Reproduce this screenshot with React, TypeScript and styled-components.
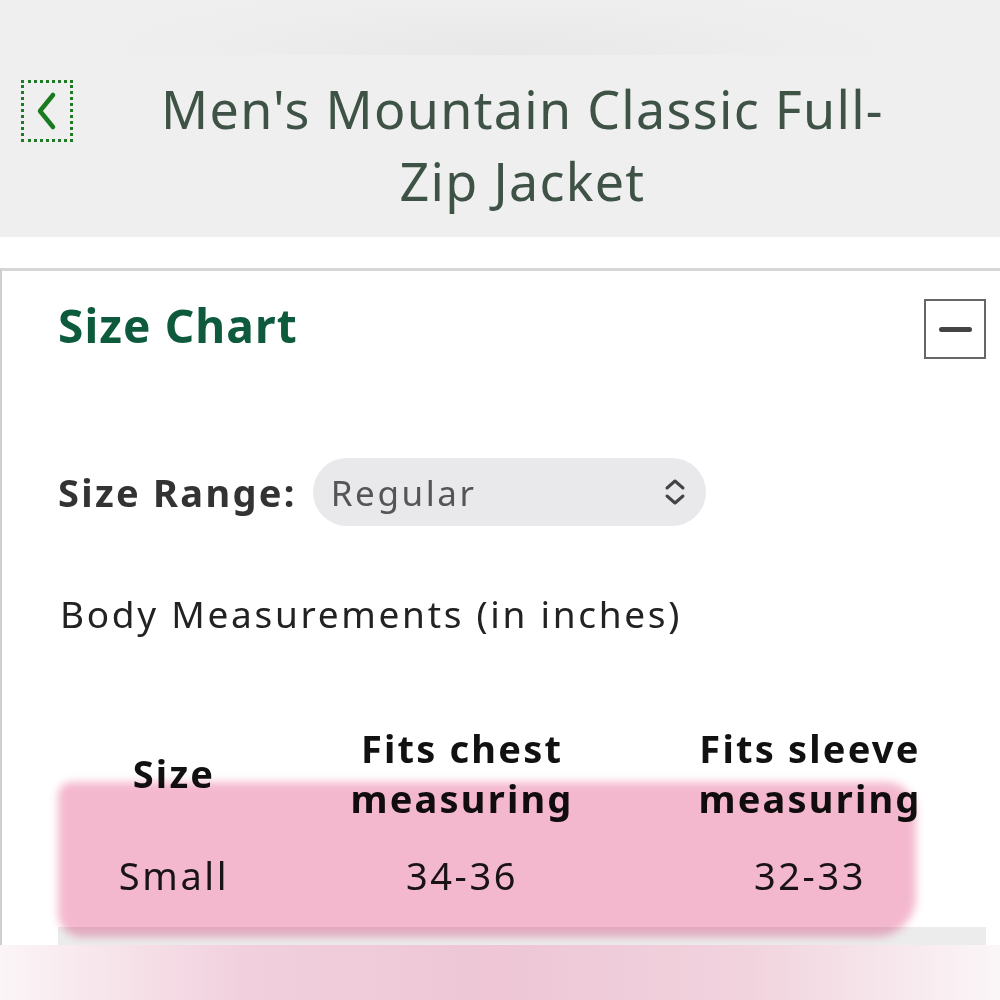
import styled, { createGlobalStyle } from "styled-components";

const GlobalStyle = createGlobalStyle`
    html, body {
        margin: 0;
        padding: 0;
        background: #ffffff;
        font-family: "Noto Sans", "Open Sans", sans-serif;
    }
`;

type Row = {
    size: string;
    chest: string;
    sleeve: string;
};

const rows: Row[] = [{ size: "Small", chest: "34-36", sleeve: "32-33" }];

const BackIcon = () => (
    <svg width="28" height="42" viewBox="0 0 28 42">
        <path
            d="M20 5 L7 21 L20 37"
            fill="none"
            stroke="#1a7a1f"
            strokeWidth="4.5"
            strokeLinecap="round"
            strokeLinejoin="round"
        />
    </svg>
);

const UpDownIcon = () => (
    <svg width="26" height="30" viewBox="0 0 26 30">
        <path
            d="M5 11 L13 4 L21 11 M5 19 L13 26 L21 19"
            fill="none"
            stroke="#444"
            strokeWidth="3"
            strokeLinecap="round"
            strokeLinejoin="round"
        />
    </svg>
);

const App = () => {
    return (
        <>
            <GlobalStyle />
            <SPage>
                <STopStrip />
                <SHeader>
                    <SBackButton>
                        <BackIcon />
                    </SBackButton>
                    <STitle>
                        Men's Mountain Classic Full-
                        <br />
                        Zip Jacket
                    </STitle>
                </SHeader>
                <SGap />
                <SPanel>
                    <SPanelHead>
                        <h2>Size Chart</h2>
                        <SToggle>
                            <span />
                        </SToggle>
                    </SPanelHead>
                    <SRangeRow>
                        <label>Size Range:</label>
                        <SSelect>
                            <span>Regular</span>
                            <UpDownIcon />
                        </SSelect>
                    </SRangeRow>
                    <SCaption>Body Measurements (in inches)</SCaption>
                    <STableWrap>
                        <SHighlight />
                        <STable>
                            <thead>
                                <tr>
                                    <th>Size</th>
                                    <th>
                                        Fits chest
                                        <br />
                                        measuring
                                    </th>
                                    <th>
                                        Fits sleeve
                                        <br />
                                        measuring
                                    </th>
                                </tr>
                            </thead>
                            <tbody>
                                {rows.map((r) => (
                                    <tr key={r.size}>
                                        <td>{r.size}</td>
                                        <td>{r.chest}</td>
                                        <td>{r.sleeve}</td>
                                    </tr>
                                ))}
                                <SStripe>
                                    <td colSpan={3} />
                                </SStripe>
                            </tbody>
                        </STable>
                    </STableWrap>
                </SPanel>
                <SBottomFade />
            </SPage>
        </>
    );
};

const SPage = styled.div`
    width: 1000px;
    height: 1000px;
    overflow: hidden;
    display: flex;
    flex-direction: column;
`;

const STopStrip = styled.div`
    height: 55px;
    flex: none;
    background: radial-gradient(ellipse 45% 140% at 50% 100%, #e8e8e8, #eeeeee 70%, #efefef);
`;

const SHeader = styled.header`
    height: 182px;
    flex: none;
    background: #efefef;
    display: flex;
    align-items: flex-start;
    padding: 25px 56px 0 21px;
    box-sizing: border-box;
`;

const SBackButton = styled.button`
    width: 52px;
    height: 62px;
    flex: none;
    background: transparent;
    border: 3px dotted #1f7a25;
    padding: 0;
    display: flex;
    align-items: center;
    justify-content: center;
`;

const STitle = styled.h1`
    flex: 1;
    margin: -7px 0 0;
    text-align: center;
    font-weight: 400;
    font-size: 52px;
    line-height: 72px;
    letter-spacing: 1.3px;
    color: #3e5246;
    padding-left: 28px;
`;

const SGap = styled.div`
    height: 31px;
    flex: none;
`;

const SPanel = styled.section`
    flex: 1;
    border-top: 3px solid #d6d6d6;
    border-left: 2px solid #cfcfcf;
    padding: 0 14px 0 56px;
    display: flex;
    flex-direction: column;
    min-height: 0;
`;

const SPanelHead = styled.div`
    display: flex;
    justify-content: space-between;
    align-items: flex-start;
    padding-top: 24px;
    height: 136px;
    box-sizing: border-box;
    > h2 {
        margin: 0;
        font-size: 46px;
        line-height: 60px;
        font-weight: 700;
        letter-spacing: 1.1px;
        color: #0d5a3d;
    }
`;

const SToggle = styled.button`
    width: 62px;
    height: 60px;
    margin-top: 4px;
    background: #fff;
    border: 2px solid #666;
    padding: 0;
    display: flex;
    align-items: center;
    justify-content: center;
    > span {
        width: 33px;
        height: 5px;
        border-radius: 3px;
        background: #444;
    }
`;

const SRangeRow = styled.div`
    display: flex;
    align-items: center;
    gap: 16px;
    margin-top: 53px;
    > label {
        font-size: 38px;
        font-weight: 700;
        letter-spacing: 2.3px;
        color: #333;
    }
`;

const SSelect = styled.div`
    width: 393px;
    height: 68px;
    border-radius: 34px;
    background: #e9e9eb;
    display: flex;
    align-items: center;
    justify-content: space-between;
    padding: 0 18px 0 18px;
    box-sizing: border-box;
    > span {
        font-size: 35px;
        letter-spacing: 2.6px;
        color: #555;
    }
`;

const SCaption = styled.p`
    margin: 62px 0 0 2px;
    font-size: 37px;
    letter-spacing: 2.7px;
    color: #222;
`;

const STableWrap = styled.div`
    position: relative;
    margin-top: 84px;
`;

const SHighlight = styled.div`
    position: absolute;
    left: 0;
    top: 59px;
    width: 858px;
    height: 155px;
    background: #f4b8ce;
    border-radius: 14px 30px 40px 24px;
    filter: blur(4px);
    mix-blend-mode: multiply;
    pointer-events: none;
`;

const STable = styled.table`
    width: 928px;
    border-collapse: collapse;
    color: #111;
    th {
        font-size: 38px;
        font-weight: 700;
        line-height: 50px;
        letter-spacing: 2.2px;
        padding: 0;
        vertical-align: middle;
    }
    td {
        font-size: 38px;
        letter-spacing: 2.6px;
        text-align: center;
        height: 104px;
        padding: 0;
        color: #1a1a1a;
    }
    th:nth-child(1),
    td:nth-child(1) {
        width: 232px;
    }
    th:nth-child(2),
    td:nth-child(2) {
        width: 344px;
    }
`;

const SStripe = styled.tr`
    > td {
        height: 18px !important;
        background: #ececec;
    }
`;

const SBottomFade = styled.div`
    height: 55px;
    flex: none;
    background: linear-gradient(90deg, #fbf5f7 0%, #f1cfdc 25%, #eec6d5 50%, #f1d3de 75%, #fbf6f8 100%);
`;

export default App;
